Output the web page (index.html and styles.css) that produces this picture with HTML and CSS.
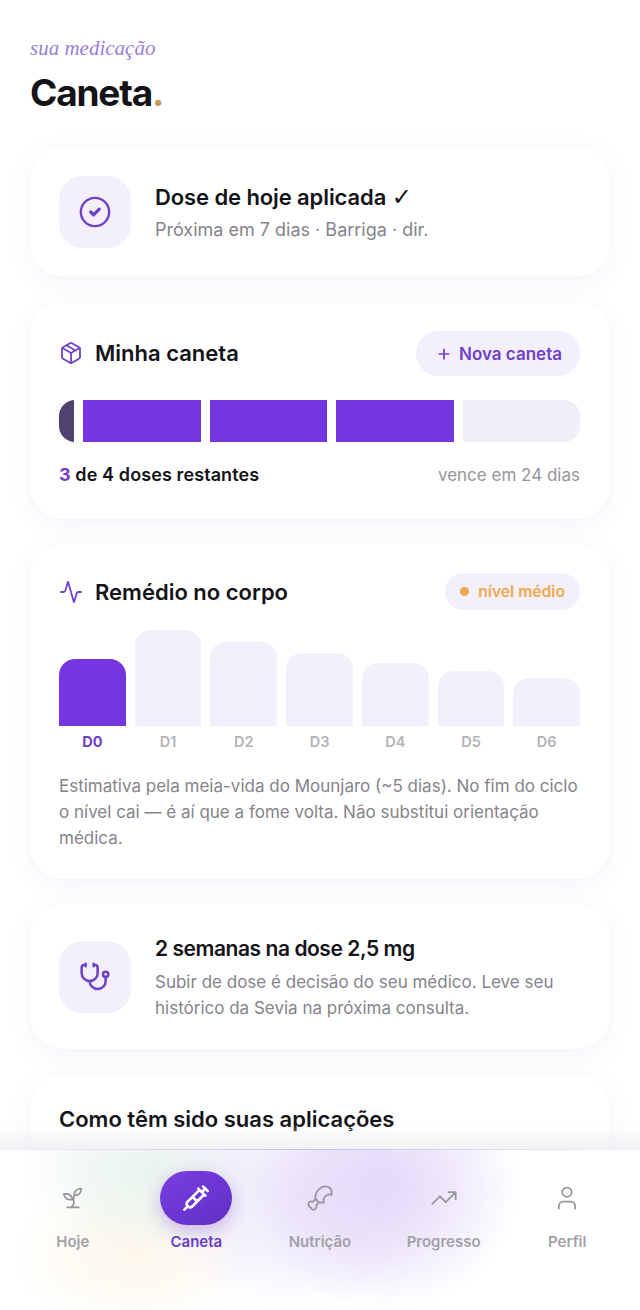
FILE: index.html
```html
<!DOCTYPE html>
<html lang="pt-BR">
<head>
<meta charset="utf-8">
<title>Caneta</title>
<link rel="stylesheet" href="styles.css">
</head>
<body>
<div class="screen">
  <main class="content">
    <header class="head">
      <p class="eyebrow">sua medicação</p>
      <h1 class="title">Caneta<span class="dot">.</span></h1>
    </header>

    <section class="card row-card status">
      <div class="tile">
        <svg class="ic-34" viewBox="0 0 24 24"><circle cx="12" cy="12" r="10"/><path class="bold" d="M9 12l2 2 4-4"/></svg>
      </div>
      <div class="row-text">
        <h2 class="row-title">Dose de hoje aplicada <span class="tick">✓</span></h2>
        <p class="row-sub large">Próxima em 7 dias · Barriga · dir.</p>
      </div>
    </section>

    <section class="card pen">
      <div class="card-head">
        <div class="card-title raised">
          <svg class="ic-24" viewBox="0 0 24 24"><path d="M11 21.730a2 2 0 0 0 2 0l7-4A2 2 0 0 0 21 16V8a2 2 0 0 0-1-1.730l-7-4a2 2 0 0 0-2 0l-7 4A2 2 0 0 0 3 8v8a2 2 0 0 0 1 1.730z"/><path d="M12 22V12M3.290 7L12 12l8.710-5M7.500 4.270l9 5.150"/></svg>
          <h2>Minha caneta</h2>
        </div>
        <button class="new-btn"><svg class="plus" viewBox="0 0 24 24"><path d="M5 12h14M12 5v14"/></svg>Nova caneta</button>
      </div>
      <div class="doses">
        <span class="seg-stub"></span>
        <span class="seg on"></span>
        <span class="seg on"></span>
        <span class="seg on"></span>
        <span class="seg"></span>
      </div>
      <div class="pen-foot">
        <span class="left"><b>3</b> de 4 doses restantes</span>
        <span class="expire">vence em 24 dias</span>
      </div>
    </section>

    <section class="card body-card">
      <div class="card-head compact">
        <div class="card-title">
          <svg class="ic-24" viewBox="0 0 24 24"><path d="M22 12h-2.480a2 2 0 0 0-1.930 1.460l-2.350 8.360a.25.25 0 0 1-.48 0L9.240 2.180a.25.25 0 0 0-.48 0l-2.350 8.360A2 2 0 0 1 4.490 12H2"/></svg>
          <h2>Remédio no corpo</h2>
        </div>
        <span class="level"><i class="level-dot"></i>nível médio</span>
      </div>
      <div class="chart">
        <div class="col active"><div class="bar" style="height:67px"></div><span>D0</span></div>
        <div class="col"><div class="bar" style="height:96px"></div><span>D1</span></div>
        <div class="col"><div class="bar" style="height:84px"></div><span>D2</span></div>
        <div class="col"><div class="bar" style="height:73px"></div><span>D3</span></div>
        <div class="col"><div class="bar" style="height:63px"></div><span>D4</span></div>
        <div class="col"><div class="bar" style="height:55px"></div><span>D5</span></div>
        <div class="col"><div class="bar" style="height:48px"></div><span>D6</span></div>
      </div>
      <p class="note">Estimativa pela meia-vida do Mounjaro (~5 dias). No fim do ciclo o nível cai — é aí que a fome volta. Não substitui orientação médica.</p>
    </section>

    <section class="card row-card advice">
      <div class="tile">
        <svg class="ic-32" viewBox="0 0 24 24"><path d="M11 2v2M5 2v2M5 3H4a2 2 0 0 0-2 2v4a6 6 0 0 0 12 0V5a2 2 0 0 0-2-2h-1M8 15a6 6 0 0 0 12 0v-3"/><circle cx="20" cy="10" r="2"/></svg>
      </div>
      <div class="row-text">
        <h2 class="row-title tight">2 semanas na dose 2,5 mg</h2>
        <p class="row-sub">Subir de dose é decisão do seu médico. Leve seu histórico da Sevia na próxima consulta.</p>
      </div>
    </section>

    <section class="card last">
      <h2 class="plain-title">Como têm sido suas aplicações</h2>
    </section>
  </main>

  <nav class="tabbar">
    <a class="tab">
      <span class="tab-icon"><svg viewBox="0 0 24 24"><path d="M7 20h10M10 20c5.500-2.500.8-6.400 3-10M9.500 9.400c1.100.8 1.800 2.200 2.300 3.700-2 .4-3.500.4-4.800-.3-1.200-.6-2.300-1.900-3-4.200 2.800-.5 4.400 0 5.500.8zM14.100 6a7 7 0 0 0-1.100 4c1.900-.1 3.300-.6 4.300-1.400 1-1 1.600-2.300 1.700-4.600-2.700.1-4 1-4.900 2z"/></svg></span>
      <span class="tab-label">Hoje</span>
    </a>
    <a class="tab current">
      <span class="tab-icon pill"><svg viewBox="0 0 24 24"><path d="M18 2l4 4M17 7l3-3M19 9L8.700 19.300c-1 1-2.500 1-3.400 0l-.6-.6c-1-1-1-2.500 0-3.400L15 5M9 11l4 4M5 19l-3 3M14 4l6 6"/></svg></span>
      <span class="tab-label">Caneta</span>
    </a>
    <a class="tab">
      <span class="tab-icon"><svg viewBox="0 0 24 24"><path d="M15.400 15.630a7.875 6 135 1 1 6.230-6.230 4.500 3.430 135 0 0-6.230 6.230M8.290 12.710l-2.600 2.600a2.500 2.500 0 1 0-1.650 4.650A2.500 2.500 0 1 0 8.700 18.300l2.590-2.590"/></svg></span>
      <span class="tab-label">Nutrição</span>
    </a>
    <a class="tab">
      <span class="tab-icon"><svg viewBox="0 0 24 24"><path d="M16 7h6v6M22 7l-8.500 8.500-5-5L2 17"/></svg></span>
      <span class="tab-label">Progresso</span>
    </a>
    <a class="tab">
      <span class="tab-icon"><svg viewBox="0 0 24 24"><path d="M19 21v-2a4 4 0 0 0-4-4H9a4 4 0 0 0-4 4v2"/><circle cx="12" cy="7" r="4"/></svg></span>
      <span class="tab-label">Perfil</span>
    </a>
  </nav>
</div>
</body>
</html>
```
FILE: styles.css
```css
* { box-sizing: border-box; }
html, body { margin: 0; padding: 0; }
body {
  background: #fff;
  color: #141318;
  font-family: "Inter", "Noto Sans", sans-serif;
}
h1, h2, p { margin: 0; }
.screen { position: relative; width: 640px; height: 1310px; overflow: hidden; background: #fff; }
.content { display: flex; flex-direction: column; gap: 25px; padding: 36px 30px 0; }
.head { height: 85px; }
.eyebrow {
  font-family: "Liberation Serif", serif;
  font-style: italic;
  font-size: 21px;
  line-height: 24px;
  color: #9a7fd6;
}
.title {
  margin-top: 9px;
  font-size: 37px;
  line-height: 48px;
  font-weight: 700;
  letter-spacing: -1.2px;
  color: #141318;
}
.dot { color: #c49a5a; }

.card {
  background: #fff;
  border-radius: 32px;
  padding: 29px 30px 31px 29px;
  box-shadow: 0 6px 24px rgba(110, 80, 190, 0.07), 0 0 2px rgba(110, 80, 190, 0.05);
}
.row-card { display: flex; align-items: center; gap: 24px; padding-top: 0; padding-bottom: 0; }
.status { height: 131px; }
.advice { height: 145px; }
.tile {
  width: 72px; height: 72px; flex: none;
  border-radius: 24px;
  background: #f3effb;
  display: flex; align-items: center; justify-content: center;
}
svg { fill: none; stroke-linecap: round; stroke-linejoin: round; }
.ic-34 { width: 34px; height: 34px; stroke: #7040c8; stroke-width: 1.700; }
.ic-34 .bold { stroke-width: 2.300; }
.ic-32 { width: 32px; height: 32px; stroke: #7040c8; stroke-width: 1.900; }
.ic-24 { width: 24px; height: 24px; stroke: #7040c8; stroke-width: 1.800; }
.row-text { display: flex; flex-direction: column; gap: 6px; min-width: 0; padding-top: 2px; }
.row-title { font-size: 22px; line-height: 28px; font-weight: 600; letter-spacing: -0.1px; }
.row-title.tight { font-size: 21px; letter-spacing: -0.45px; }
.tick { font-family: "DejaVu Sans", sans-serif; font-weight: 400; font-size: 24px; line-height: 24px; }
.row-sub { font-size: 17px; line-height: 26px; color: #85838c; }
.row-sub.large { font-size: 18px; }

.card-head { display: flex; align-items: center; justify-content: space-between; height: 45px; }
.card-head.compact { height: 37px; }
.card-title { display: flex; align-items: center; gap: 12px; }
.card-title.raised { padding-bottom: 2px; }
.card-title h2 { font-size: 22px; line-height: 28px; font-weight: 600; }
.new-btn {
  height: 45px; padding: 0 18px 0 20px;
  border: 0; border-radius: 23px;
  background: #f3effb; color: #7040c8;
  font: 600 17px "Inter", sans-serif;
  display: flex; align-items: center; gap: 7px;
}
.plus { width: 16px; height: 16px; stroke: #7040c8; stroke-width: 2.600; }
.doses { display: flex; gap: 9px; height: 42px; margin-top: 24px; border-radius: 16px; overflow: hidden; }
.seg-stub { width: 15px; flex: none; background: #4f4270; }
.seg { flex: 1; background: #f0eef7; }
.seg.on { background: #7636df; }
.pen-foot { display: flex; align-items: center; justify-content: space-between; margin-top: 20px; line-height: 26px; }
.left { font-size: 18px; font-weight: 600; letter-spacing: 0.1px; }
.left b { color: #7040c8; font-weight: 700; }
.expire { font-size: 17px; color: #96949c; }

.body-card { padding-bottom: 28px; }
.level {
  height: 37px; padding: 0 15px;
  border-radius: 19px;
  background: #f3effb; color: #eea84e;
  font-size: 15.700px; font-weight: 600;
  display: flex; align-items: center; gap: 9px;
}
.level-dot { width: 9px; height: 9px; border-radius: 50%; background: #eea84e; }
.chart { display: flex; align-items: flex-end; gap: 9px; margin-top: 20px; height: 119px; }
.col { flex: 1; display: flex; flex-direction: column; align-items: stretch; }
.bar { background: #f3effb; border-radius: 16px 16px 0 0; }
.col span { height: 23px; line-height: 32px; text-align: center; font-size: 14.500px; font-weight: 600; color: #b4b2b9; }
.col.active .bar { background: #7636df; }
.col.active span { color: #7040c8; font-weight: 700; }
.note { margin-top: 24px; font-size: 17px; line-height: 26px; color: #85838c; }
.plain-title { font-size: 22px; line-height: 30px; font-weight: 600; }
.last { height: 260px; padding-top: 30px; }

.tabbar {
  position: absolute; left: 0; right: 0; bottom: 0; height: 161px;
  display: grid; grid-template-columns: repeat(5, 1fr);
  align-items: start;
  padding: 21px 11px 0;
  border-top: 1.500px solid;
  border-image: linear-gradient(90deg, #f1f0f4, #cdbcee 50%, #f3f2f6) 1;
  background:
    radial-gradient(135px 125px at 385px 35px, rgba(226, 214, 248, 0.9) 0%, rgba(226, 214, 248, 0.55) 50%, rgba(226, 214, 248, 0) 100%),
    radial-gradient(150px 110px at 295px 50px, rgba(234, 228, 250, 0.8) 0%, rgba(234, 228, 250, 0.5) 50%, rgba(234, 228, 250, 0) 100%),
    radial-gradient(130px 85px at 150px 20px, rgba(226, 240, 232, 0.75) 0%, rgba(226, 240, 232, 0.45) 50%, rgba(226, 240, 232, 0) 100%),
    radial-gradient(125px 75px at 135px 105px, rgba(253, 245, 230, 0.8) 0%, rgba(253, 245, 230, 0.45) 50%, rgba(253, 245, 230, 0) 100%),
    #fff;
}
.tabbar::before {
  content: "";
  position: absolute; left: 0; right: 0; top: -26px; height: 25px;
  background: linear-gradient(to bottom, rgba(244, 243, 247, 0), rgba(240, 239, 244, 0.85));
}
.tab { display: flex; flex-direction: column; align-items: center; color: #a3a1a8; }
.tab-icon { width: 72px; height: 54px; display: flex; align-items: center; justify-content: center; border-radius: 27px; }
.tab-icon svg { width: 28px; height: 28px; stroke: #96949c; stroke-width: 1.500; }
.pill { background: linear-gradient(145deg, #7a3ee2, #5f2fc4); box-shadow: 0 6px 18px rgba(100, 50, 200, 0.3); }
.pill svg { stroke: #fff; stroke-width: 2.300; }
.tab-label { margin-top: 7px; font-size: 15px; line-height: 20px; font-weight: 600; }
.current .tab-label { color: #6b3cc6; }
```
